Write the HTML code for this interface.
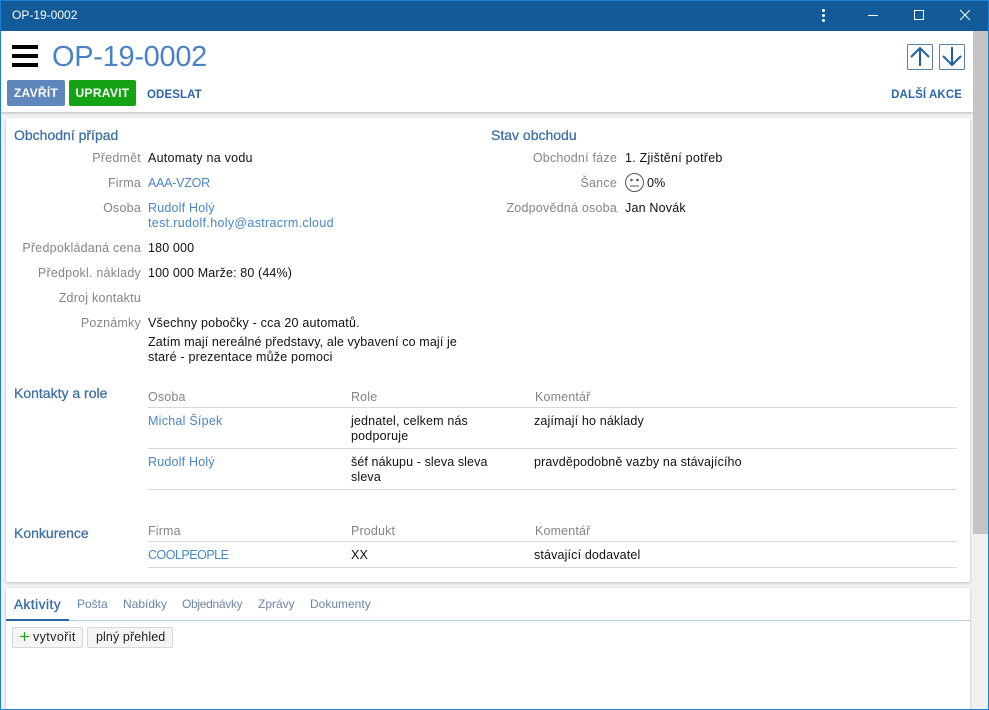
<!DOCTYPE html>
<html lang="cs"><head><meta charset="utf-8"><title>OP-19-0002</title>
<style>
*{box-sizing:border-box}
html,body{margin:0;padding:0;width:989px;height:710px;overflow:hidden;background:#f3f3f3;font-family:"Liberation Sans",sans-serif;font-size:12.5px;color:#111}
body{position:relative}
.a{position:absolute;white-space:nowrap;line-height:15px;letter-spacing:.15px}
.l{color:#858585;text-align:right;right:848px;letter-spacing:.22px}
.l2{color:#858585;text-align:right;right:372px;letter-spacing:.22px}
.k{color:#4a86c5}
.h{color:#3a6ea5;font-size:14px;line-height:16px;letter-spacing:0;-webkit-text-stroke:.25px #3a6ea5}
.th{color:#858585}
.ln{position:absolute;height:1px;background:#d8d8d8;left:148px;width:809px}
.b{position:absolute;background:#fff}
.tab{color:#6d84a3;font-size:12px;letter-spacing:0}
.btn{position:absolute;top:627px;height:21px;background:#f5f5f5;border:1px solid #d8d8d8;border-radius:2px;line-height:19px;font-size:12.5px;color:#222;white-space:nowrap}
.ab{font-weight:700;font-size:11.5px;letter-spacing:.1px;color:#2a66a3}
</style></head><body>
<div class="b" style="left:0;top:31px;width:973px;height:81px;box-shadow:0 1px 3px rgba(0,0,0,.25)"></div>
<div class="b" style="left:6px;top:118px;width:964px;height:464px;border-radius:2px;box-shadow:0 1px 3px rgba(0,0,0,.22)"></div>
<div class="b" style="left:6px;top:588px;width:964px;height:122px;border-radius:2px 2px 0 0;box-shadow:0 1px 3px rgba(0,0,0,.22)"></div>
<div class="b" style="left:973px;top:31px;width:15px;height:679px;background:#f0f0f0"></div>
<div class="b" style="left:973px;top:31px;width:15px;height:503px;background:#c4c4c4"></div>

<div class="b" style="left:0;top:0;width:989px;height:31px;background:#135a98;border-top:1px solid #1a80d8"></div>
<div class="a" style="left:12px;top:8px;color:#fff;font-size:12px;letter-spacing:0">OP-19-0002</div>
<svg style="position:absolute;left:815px;top:5px" width="174" height="22" viewBox="0 0 174 22" fill="none" stroke="#fff">
<g fill="#fff" stroke="none"><circle cx="8.500" cy="5.500" r="1.500"/><circle cx="8.500" cy="10.500" r="1.500"/><circle cx="8.500" cy="15.500" r="1.500"/></g>
<path d="M53 10.500H63" stroke-width="1"/><rect x="99.500" y="5.500" width="9" height="9" stroke-width="1"/><path d="M145 5l10 10M155 5l-10 10" stroke-width="1"/>
</svg>

<svg style="position:absolute;left:12px;top:45px" width="26" height="23"><rect width="26" height="4" fill="#000"/><rect y="9" width="26" height="4" fill="#000"/><rect y="18" width="26" height="4" fill="#000"/></svg>
<div class="a" style="left:52px;top:40px;font-size:29px;line-height:34px;color:#4a82c4;letter-spacing:-.3px">OP-19-0002</div>

<div class="a" style="left:7px;top:80px;width:58px;height:26px;background:#5f86bd;border-radius:2px;color:#fff;font-weight:700;font-size:12px;line-height:26px;text-align:center;letter-spacing:.3px">ZAVŘÍT</div>
<div class="a" style="left:69px;top:80px;width:67px;height:26px;background:#14a314;border-radius:2px;color:#fff;font-weight:700;font-size:12px;line-height:26px;text-align:center;letter-spacing:.3px">UPRAVIT</div>
<div class="a ab" style="left:147px;top:87px;margin-top:1px">ODESLAT</div>
<div class="a ab" style="right:27px;top:87px;margin-top:1px">DALŠÍ AKCE</div>
<svg style="position:absolute;left:907px;top:44px" width="58" height="26" fill="none" stroke="#1f5f9f">
<rect x=".5" y=".5" width="25" height="25" rx="1" stroke="#5b7fa6"/><rect x="32.500" y=".5" width="25" height="25" rx="1" stroke="#5b7fa6"/>
<path d="M13 22V4M4 13L13 4l9 9M45 3v18M36 12L45 21l9-9" stroke-width="2"/></svg>

<div class="a h" style="left:14px;top:127px">Obchodní případ</div>
<div class="a h" style="left:491px;top:127px">Stav obchodu</div>
<div class="a l" style="top:151px">Předmět</div><div class="a" style="left:148px;top:151px;letter-spacing:.25px">Automaty na vodu</div>
<div class="a l" style="top:176px">Firma</div><div class="a k" style="left:148px;top:176px;letter-spacing:-.25px">AAA-VZOR</div>
<div class="a l" style="top:201px">Osoba</div><div class="a k" style="left:148px;top:201px;letter-spacing:.2px">Rudolf Holý</div>
<div class="a k" style="left:148px;top:216px;letter-spacing:.32px">test.rudolf.holy@astracrm.cloud</div>
<div class="a l" style="top:241px">Předpokládaná cena</div><div class="a" style="left:148px;top:241px">180 000</div>
<div class="a l" style="top:266px">Předpokl. náklady</div><div class="a" style="left:148px;top:266px;letter-spacing:.13px">100 000 Marže: 80 (44%)</div>
<div class="a l" style="top:291px">Zdroj kontaktu</div>
<div class="a l" style="top:316px">Poznámky</div><div class="a" style="left:148px;top:316px;letter-spacing:.2px">Všechny pobočky - cca 20 automatů.</div>
<div class="a" style="left:148px;top:335px;letter-spacing:.13px">Zatím mají nereálné představy, ale vybavení co mají je</div>
<div class="a" style="left:148px;top:350px;letter-spacing:.2px">staré - prezentace může pomoci</div>

<div class="a l2" style="top:151px">Obchodní fáze</div><div class="a" style="left:625px;top:151px;letter-spacing:.25px">1. Zjištění potřeb</div>
<div class="a l2" style="top:176px">Šance</div>
<svg style="position:absolute;left:624px;top:172px" width="21" height="21" fill="none" stroke="#555"><circle cx="10.500" cy="10.500" r="9"/><path d="M6 14h9"/><circle cx="7.500" cy="8" r=".8" fill="#555"/><circle cx="13.500" cy="8" r=".8" fill="#555"/></svg>
<div class="a" style="left:647px;top:176px">0%</div>
<div class="a l2" style="top:201px">Zodpovědná osoba</div><div class="a" style="left:625px;top:201px;letter-spacing:.2px">Jan Novák</div>

<div class="a h" style="left:14px;top:385px">Kontakty a role</div>
<div class="a th" style="left:148px;top:390px">Osoba</div><div class="a th" style="left:351px;top:390px">Role</div><div class="a th" style="left:535px;top:390px">Komentář</div>
<div class="ln" style="top:407px"></div>
<div class="a k" style="left:148px;top:414px;letter-spacing:.25px">Michal Šípek</div><div class="a" style="left:351px;top:414px">jednatel, celkem nás</div><div class="a" style="left:351px;top:429px;letter-spacing:.2px">podporuje</div><div class="a" style="left:534px;top:414px">zajímají ho náklady</div>
<div class="ln" style="top:448px"></div>
<div class="a k" style="left:148px;top:455px;letter-spacing:.2px">Rudolf Holý</div><div class="a" style="left:351px;top:455px;letter-spacing:.1px">šéf nákupu - sleva sleva</div><div class="a" style="left:351px;top:470px">sleva</div><div class="a" style="left:534px;top:455px;letter-spacing:.12px">pravděpodobně vazby na stávajícího</div>
<div class="ln" style="top:489px"></div>

<div class="a h" style="left:14px;top:525px">Konkurence</div>
<div class="a th" style="left:148px;top:524px">Firma</div><div class="a th" style="left:351px;top:524px">Produkt</div><div class="a th" style="left:535px;top:524px">Komentář</div>
<div class="ln" style="top:541px"></div>
<div class="a k" style="left:148px;top:548px;letter-spacing:-.5px">COOLPEOPLE</div><div class="a" style="left:351px;top:548px">XX</div><div class="a" style="left:534px;top:548px">stávající dodavatel</div>
<div class="ln" style="top:567px"></div>

<div class="a" style="left:14px;top:597px;color:#3a6ea5;font-size:13.500px;letter-spacing:.55px;-webkit-text-stroke:.35px #3a6ea5">Aktivity</div>
<div class="a tab" style="left:77px;top:597px">Pošta</div>
<div class="a tab" style="left:123px;top:597px">Nabídky</div>
<div class="a tab" style="left:182px;top:597px;letter-spacing:-.3px">Objednávky</div>
<div class="a tab" style="left:258px;top:597px">Zprávy</div>
<div class="a tab" style="left:310px;top:597px">Dokumenty</div>
<div class="b" style="left:6px;top:620px;width:964px;height:1px;background:#b4cbe2"></div>
<div class="b" style="left:6px;top:619px;width:63px;height:2px;background:#2a63a8"></div>
<div class="btn" style="left:12px;width:71px;padding-left:20px;letter-spacing:.4px">vytvořit</div>
<svg style="position:absolute;left:19px;top:631px" width="11" height="11"><path d="M5.500 1v9M1 5.500h9" stroke="#22a322" stroke-width="1.300"/></svg>
<div class="btn" style="left:87px;width:86px;padding-left:8px;letter-spacing:.1px">plný přehled</div>

<div style="position:absolute;left:0;top:0;width:1px;height:710px;background:#1a80d8"></div>
<div style="position:absolute;right:0;top:0;width:1px;height:710px;background:#1a80d8"></div>
<div style="position:absolute;left:0;top:709px;width:989px;height:1px;background:#1a80d8"></div>
</body></html>
